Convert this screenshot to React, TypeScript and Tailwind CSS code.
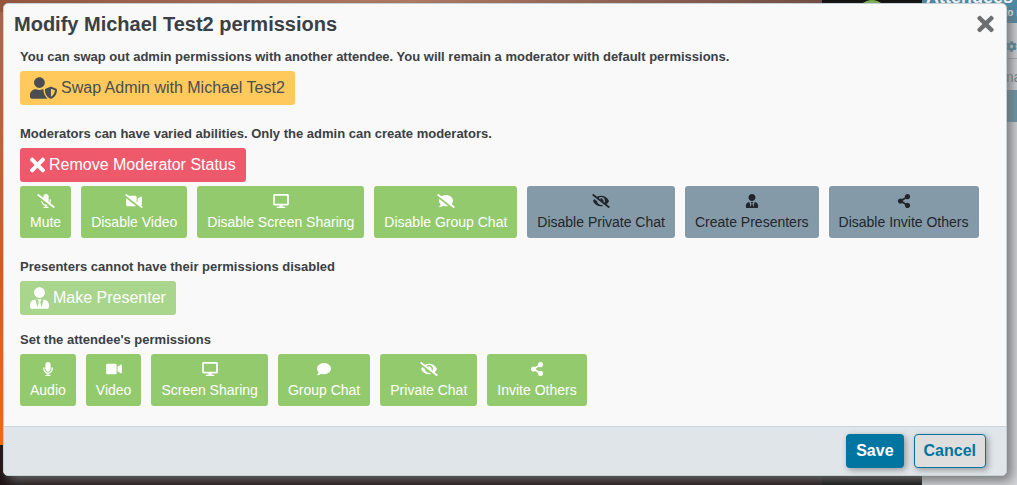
import type { ReactNode } from 'react';
import type { IconType } from 'react-icons';
import {
  FaCog,
  FaComment,
  FaCommentSlash,
  FaDesktop,
  FaEyeSlash,
  FaMicrophone,
  FaMicrophoneSlash,
  FaShareAlt,
  FaTimes,
  FaUserShield,
  FaUserTie,
  FaVideo,
  FaVideoSlash,
} from 'react-icons/fa';

interface Permission {
  label: string;
  icon: IconType;
  off?: boolean;
}

const moderatorPermissions: Permission[] = [
  { label: 'Mute', icon: FaMicrophoneSlash },
  { label: 'Disable Video', icon: FaVideoSlash },
  { label: 'Disable Screen Sharing', icon: FaDesktop },
  { label: 'Disable Group Chat', icon: FaCommentSlash },
  { label: 'Disable Private Chat', icon: FaEyeSlash, off: true },
  { label: 'Create Presenters', icon: FaUserTie, off: true },
  { label: 'Disable Invite Others', icon: FaShareAlt, off: true },
];

const attendeePermissions: Permission[] = [
  { label: 'Audio', icon: FaMicrophone },
  { label: 'Video', icon: FaVideo },
  { label: 'Screen Sharing', icon: FaDesktop },
  { label: 'Group Chat', icon: FaComment },
  { label: 'Private Chat', icon: FaEyeSlash },
  { label: 'Invite Others', icon: FaShareAlt },
];

function PermissionRow({ items }: { items: Permission[] }) {
  return (
    <div className="flex flex-wrap gap-x-[10px] gap-y-1">
      {items.map(({ label, icon: Icon, off }) => (
        <button
          key={label}
          type="button"
          className={`flex h-[52px] flex-col items-center gap-1 rounded-[3px] px-[10px] pt-2 text-sm leading-5 whitespace-nowrap ${
            off ? 'bg-[#859aa9] text-[#20262b]' : 'bg-[#93ca6e] text-white'
          }`}
        >
          <Icon className="h-[14px] w-[18px]" />
          {label}
        </button>
      ))}
    </div>
  );
}

function Section({ title, children }: { title: string; children: ReactNode }) {
  return (
    <section className="flex flex-col items-start gap-1 pt-[1px]">
      <h3 className="text-[13px] leading-5 font-bold">{title}</h3>
      {children}
    </section>
  );
}

// The meeting room that shows around the edges of the dialog
function RoomBackdrop() {
  return (
    <div className="absolute inset-0 flex overflow-hidden bg-black" aria-hidden="true">
      <div className="flex flex-1 flex-col">
        <div className="h-3 bg-linear-to-r from-[#97543a] via-[#b57b63] to-[#744b40]" />
        <div className="flex-1 bg-linear-to-b from-[#a8674e] via-[#e0591c] via-60% to-[#ff6a0a]" />
        <div className="h-10 bg-[#1c1214]" />
      </div>
      <div className="flex w-[100px] justify-center bg-[#0c0c0c]">
        <div className="h-7 w-7 rounded-full bg-[#7fb750]" />
      </div>
      <div className="w-[95px] overflow-hidden bg-[#d4d7db] text-[#777c80]">
        <div className="flex h-[23px] flex-col justify-end bg-[#4b8ba8] pb-1 whitespace-nowrap text-white">
          <span className="pl-1 text-lg leading-5 font-bold">Attendees</span>
          <span className="pl-[82px] text-[10px] leading-3 font-bold">to m</span>
        </div>
        <div className="flex h-9 items-center justify-end border-b border-[#a9adb1] pt-3">
          <FaCog className="size-[11px] text-[#4b8ba8]" />
        </div>
        <div className="h-[31px] pt-2 pl-20 text-sm leading-5">ma</div>
        <div className="h-8 bg-[#6797ab]" />
      </div>
    </div>
  );
}

export default function App() {
  return (
    <div className="relative min-h-screen pt-[3px] pr-[10px] pb-[9px] pl-[3px] font-['Liberation_Sans',Arial,sans-serif]">
      <RoomBackdrop />
      <div
        role="dialog"
        aria-modal="true"
        aria-labelledby="dialog-title"
        className="relative overflow-hidden rounded-[5px] border border-[#c6d0d7] bg-[#f9f9f9] text-[#3b4044] shadow-[5px_5px_12px_rgba(110,110,110,0.9)]"
      >
        <header className="flex items-center justify-between pt-2 pr-3 pl-[10px]">
          <h2 id="dialog-title" className="text-xl leading-6 font-bold">
            Modify Michael Test2 permissions
          </h2>
          <button type="button" aria-label="Close" className="text-[#6b6f72]">
            <FaTimes className="h-6 w-[17px]" />
          </button>
        </header>

        <div className="flex flex-col gap-[14px] px-4 pt-[10px] pb-5">
          <Section title="You can swap out admin permissions with another attendee. You will remain a moderator with default permissions.">
            <button
              type="button"
              className="mb-1 flex h-[34px] items-center gap-1 rounded-[3px] bg-[#ffc95c] px-[10px] text-[#4a4e52]"
            >
              <FaUserShield className="h-[22px] w-[27px]" />
              Swap Admin with Michael Test2
            </button>
          </Section>

          <Section title="Moderators can have varied abilities. Only the admin can create moderators.">
            <button
              type="button"
              className="flex h-[34px] items-center gap-1 rounded-[3px] bg-[#ee5a6b] px-[10px] text-white"
            >
              <FaTimes className="h-[22px] w-[15px]" />
              Remove Moderator Status
            </button>
            <PermissionRow items={moderatorPermissions} />
          </Section>

          <div className="pt-1">
            <Section title="Presenters cannot have their permissions disabled">
              <button
                type="button"
                className="flex h-[34px] items-center gap-1 rounded-[3px] bg-[#a9d58d] px-[10px] text-white"
              >
                <FaUserTie className="h-[22px] w-[19px]" />
                Make Presenter
              </button>
            </Section>
          </div>

          <Section title="Set the attendee's permissions">
            <PermissionRow items={attendeePermissions} />
          </Section>
        </div>

        <footer className="flex justify-end gap-[10px] border-t border-[#c9d4dc] bg-[#e0e5e9] px-5 py-[7px] font-bold">
          <button
            type="button"
            className="h-[34px] rounded-[4px] bg-[#0075a2] px-[10px] text-white shadow-[2px_2px_6px_rgba(0,0,0,0.35)]"
          >
            Save
          </button>
          <button
            type="button"
            className="h-[34px] rounded-[4px] border border-[#0075a2] bg-[#dedede] px-[9px] text-[#0075a2] shadow-[2px_2px_6px_rgba(0,0,0,0.35)]"
          >
            Cancel
          </button>
        </footer>
      </div>
    </div>
  );
}
